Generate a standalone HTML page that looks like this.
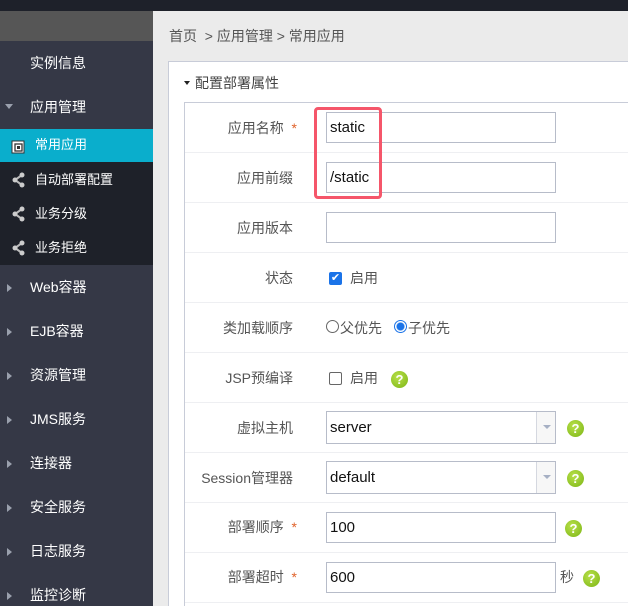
<!DOCTYPE html>
<html style="overflow:hidden;width:628px;height:606px"><head><meta charset="utf-8"><style>
*{margin:0;padding:0;box-sizing:border-box}
body{width:628px;height:606px;overflow:hidden;background:#ebebeb;font-family:"Liberation Sans","Noto Sans CJK SC",sans-serif;font-size:14px;position:relative}
.abs{position:absolute}
.top{left:0;top:0;width:628px;height:11px;background:#1e212a}
.side{left:0;top:11px;width:153px;height:595px;background:#353846}
.sgray{left:0;top:11px;width:153px;height:30px;background:#565656}
.mi{position:absolute;left:30px;color:#fff;font-size:14px;line-height:20px}
.tri{position:absolute;left:7px;width:0;height:0;border-top:4px solid transparent;border-bottom:4px solid transparent;border-left:5px solid #9aa0ad}
.sub{left:0;top:162px;width:153px;height:103px;background:#1e2129}
.act{left:0;top:129px;width:153px;height:33px;background:#0aaecc}
.si{position:absolute;left:35px;color:#fff;font-size:13px;line-height:20px}
.panel{left:168px;top:61px;width:470px;height:545px;background:#fff;border:1px solid #c8ccd8;border-bottom:none}
.tbl{left:184px;top:102px;width:450px;height:504px;border-left:1px solid #c8ccd8;border-top:1px solid #c8ccd8}
.row{position:absolute;left:185px;width:443px;height:1px;background:#eeeff2}
.lbl{position:absolute;right:333px;color:#555;font-size:14px;line-height:20px;text-align:right;white-space:nowrap}
.star{color:#e0622b}
.inp{position:absolute;left:326px;width:230px;height:31px;border:1px solid #b7bcc9;background:#fff;font-size:15px;line-height:29px;padding-left:3px;color:#111}
.sel .arr{position:absolute;right:0;top:0;width:19px;height:29px;border-left:1px solid #d5d8e0;background:#f7f7f7}
.sel .arr:after{content:"";position:absolute;left:6px;top:13px;border-left:4px solid transparent;border-right:4px solid transparent;border-top:4px solid #a6b0c4}
.q{position:absolute;width:17px;height:17px;border-radius:50%;background:radial-gradient(circle at 40% 35%,#b8e04a,#7cb515);color:#fff;font-weight:bold;font-size:13px;line-height:17px;text-align:center}
.t{position:absolute;color:#333;font-size:14px;line-height:20px}
</style></head><body>
<div class="abs top"></div>
<div class="abs side"></div>
<div class="abs sgray"></div>
<div class="mi" style="top:53px">实例信息</div>
<div class="tri" style="top:104px;border:none;border-left:4px solid transparent;border-right:4px solid transparent;border-top:5px solid #9aa0ad;left:5px"></div>
<div class="mi" style="top:97px">应用管理</div>
<div class="abs act"></div>
<div class="abs sub"></div>
<svg class="abs" style="left:11px;top:140px" width="14" height="14"><rect x="1" y="1" width="12" height="12" fill="#fff" stroke="#333"/><rect x="4" y="4" width="7" height="7" fill="none" stroke="#333" stroke-width="1.3"/><rect x="6" y="6" width="3" height="3" fill="#333"/></svg>
<div class="si" style="top:135px">常用应用</div>
<svg class="abs" style="left:11px;top:172px" width="14" height="16"><path d="M11 3 L4 8 L11 13" stroke="#bbb" stroke-width="2" fill="none"/><circle cx="11" cy="3" r="2.5" fill="#ccc"/><circle cx="4" cy="8" r="2.5" fill="#ccc"/><circle cx="11" cy="13" r="2.5" fill="#ccc"/></svg>
<div class="si" style="top:170px">自动部署配置</div>
<svg class="abs" style="left:11px;top:206px" width="14" height="16"><path d="M11 3 L4 8 L11 13" stroke="#bbb" stroke-width="2" fill="none"/><circle cx="11" cy="3" r="2.5" fill="#ccc"/><circle cx="4" cy="8" r="2.5" fill="#ccc"/><circle cx="11" cy="13" r="2.5" fill="#ccc"/></svg>
<div class="si" style="top:204px">业务分级</div>
<svg class="abs" style="left:11px;top:240px" width="14" height="16"><path d="M11 3 L4 8 L11 13" stroke="#bbb" stroke-width="2" fill="none"/><circle cx="11" cy="3" r="2.5" fill="#ccc"/><circle cx="4" cy="8" r="2.5" fill="#ccc"/><circle cx="11" cy="13" r="2.5" fill="#ccc"/></svg>
<div class="si" style="top:238px">业务拒绝</div>
<div class="tri" style="top:284px"></div><div class="mi" style="top:277px">Web容器</div>
<div class="tri" style="top:328px"></div><div class="mi" style="top:321px">EJB容器</div>
<div class="tri" style="top:372px"></div><div class="mi" style="top:365px">资源管理</div>
<div class="tri" style="top:416px"></div><div class="mi" style="top:409px">JMS服务</div>
<div class="tri" style="top:460px"></div><div class="mi" style="top:453px">连接器</div>
<div class="tri" style="top:504px"></div><div class="mi" style="top:497px">安全服务</div>
<div class="tri" style="top:548px"></div><div class="mi" style="top:541px">日志服务</div>
<div class="tri" style="top:592px"></div><div class="mi" style="top:585px">监控诊断</div>

<div class="t" style="left:169px;top:26px;color:#555">首页 &nbsp;&gt; 应用管理 &gt; 常用应用</div>
<div class="abs panel"></div>
<div style="position:absolute;left:184px;top:81px;border-left:3.5px solid transparent;border-right:3.5px solid transparent;border-top:4px solid #222"></div>
<div class="t" style="left:195px;top:73px;color:#444">配置部署属性</div>
<div class="abs tbl"></div>
<div class="row" style="top:152px"></div><div class="row" style="top:202px"></div><div class="row" style="top:252px"></div><div class="row" style="top:302px"></div><div class="row" style="top:352px"></div><div class="row" style="top:402px"></div><div class="row" style="top:452px"></div><div class="row" style="top:502px"></div><div class="row" style="top:552px"></div><div class="row" style="top:602px"></div>

<div class="lbl" style="top:118px;right:331px">应用名称 <span class="star">&nbsp;*</span></div>
<div class="inp" style="top:112px">static</div>
<div class="lbl" style="top:168px;right:335px">应用前缀</div>
<div class="inp" style="top:162px">/static</div>
<div class="lbl" style="top:218px;right:335px">应用版本</div>
<div class="inp" style="top:212px"></div>
<div class="abs" style="left:314px;top:107px;width:68px;height:92px;border:3px solid #f5566a;border-radius:4px"></div>

<div class="lbl" style="top:268px;right:335px">状态</div>
<div class="abs" style="left:329px;top:272px;width:13px;height:13px;background:#1a73e8;border-radius:2px;color:#fff;font-size:11px;line-height:13px;text-align:center">✔</div>
<div class="t" style="left:350px;top:268px;color:#555">启用</div>
<div class="lbl" style="top:318px;right:335px">类加载顺序</div>
<div class="abs" style="left:326px;top:320px;width:13px;height:13px;border:1px solid #666;border-radius:50%"></div>
<div class="t" style="left:340px;top:318px;color:#555">父优先</div>
<div class="abs" style="left:394px;top:320px;width:13px;height:13px;border:1px solid #1a73e8;border-radius:50%;background:radial-gradient(circle,#1a73e8 3.5px,#fff 4.5px)"></div>
<div class="t" style="left:408px;top:318px;color:#555">子优先</div>
<div class="lbl" style="top:368px;right:335px">JSP预编译</div>
<div class="abs" style="left:329px;top:372px;width:13px;height:13px;border:1px solid #666;border-radius:2px"></div>
<div class="t" style="left:350px;top:368px;color:#555">启用</div>
<div class="q" style="left:391px;top:371px">?</div>
<div class="lbl" style="top:418px;right:335px">虚拟主机</div>
<div class="inp sel" style="top:411px;height:33px;line-height:31px">server<div class="arr" style="height:31px"></div></div>
<div class="q" style="left:567px;top:420px">?</div>
<div class="lbl" style="top:468px;right:335px">Session管理器</div>
<div class="inp sel" style="top:461px;height:33px;line-height:31px">default<div class="arr" style="height:31px"></div></div>
<div class="q" style="left:567px;top:470px">?</div>
<div class="lbl" style="top:517px;right:331px">部署顺序 <span class="star">&nbsp;*</span></div>
<div class="inp" style="top:512px;width:230px">100</div>
<div class="q" style="left:565px;top:520px">?</div>
<div class="lbl" style="top:567px;right:331px">部署超时 <span class="star">&nbsp;*</span></div>
<div class="inp" style="top:562px;width:230px">600</div>
<div class="t" style="left:560px;top:567px;color:#555">秒</div>
<div class="q" style="left:583px;top:570px">?</div>
</body></html>
